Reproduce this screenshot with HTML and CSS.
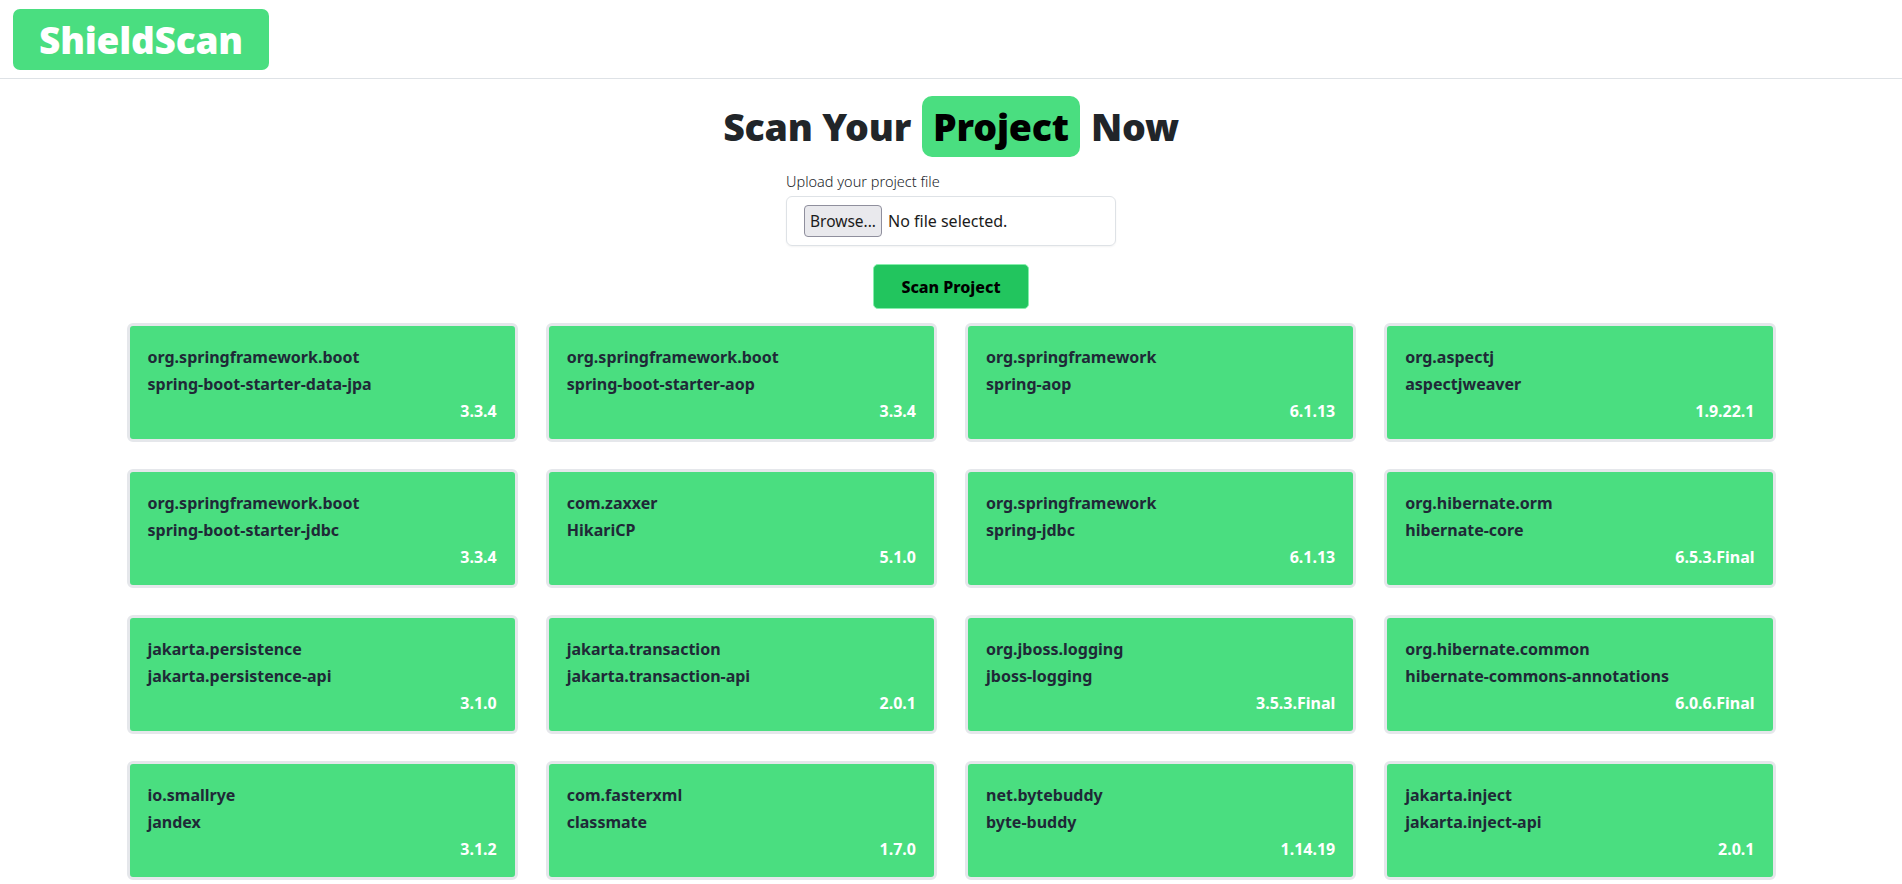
FILE: index.html
```html
<!DOCTYPE html>
<html lang="en">
<head>
<meta charset="utf-8">
<title>ShieldScan</title>
<link rel="stylesheet" href="styles.css">
</head>
<body>
<header class="site-header">
  <div class="logo">ShieldScan</div>
</header>
<main class="main">
  <h1 class="title"><span>Scan Your</span><span class="highlight">Project</span><span>Now</span></h1>
  <div class="upload">
    <label class="upload-label">Upload your project file</label>
    <div class="file-box">
      <button class="browse" type="button">Browse...</button>
      <span class="file-name">No file selected.</span>
    </div>
  </div>
  <div class="actions">
    <button class="scan-btn" type="button">Scan Project</button>
  </div>
  <section class="grid">
    <div class="card"><div class="group">org.springframework.boot</div><div class="artifact">spring-boot-starter-data-jpa</div><div class="version">3.3.4</div></div>
    <div class="card"><div class="group">org.springframework.boot</div><div class="artifact">spring-boot-starter-aop</div><div class="version">3.3.4</div></div>
    <div class="card"><div class="group">org.springframework</div><div class="artifact">spring-aop</div><div class="version">6.1.13</div></div>
    <div class="card"><div class="group">org.aspectj</div><div class="artifact">aspectjweaver</div><div class="version">1.9.22.1</div></div>
    <div class="card"><div class="group">org.springframework.boot</div><div class="artifact">spring-boot-starter-jdbc</div><div class="version">3.3.4</div></div>
    <div class="card"><div class="group">com.zaxxer</div><div class="artifact">HikariCP</div><div class="version">5.1.0</div></div>
    <div class="card"><div class="group">org.springframework</div><div class="artifact">spring-jdbc</div><div class="version">6.1.13</div></div>
    <div class="card"><div class="group">org.hibernate.orm</div><div class="artifact">hibernate-core</div><div class="version">6.5.3.Final</div></div>
    <div class="card"><div class="group">jakarta.persistence</div><div class="artifact">jakarta.persistence-api</div><div class="version">3.1.0</div></div>
    <div class="card"><div class="group">jakarta.transaction</div><div class="artifact">jakarta.transaction-api</div><div class="version">2.0.1</div></div>
    <div class="card"><div class="group">org.jboss.logging</div><div class="artifact">jboss-logging</div><div class="version">3.5.3.Final</div></div>
    <div class="card"><div class="group">org.hibernate.common</div><div class="artifact">hibernate-commons-annotations</div><div class="version">6.0.6.Final</div></div>
    <div class="card"><div class="group">io.smallrye</div><div class="artifact">jandex</div><div class="version">3.1.2</div></div>
    <div class="card"><div class="group">com.fasterxml</div><div class="artifact">classmate</div><div class="version">1.7.0</div></div>
    <div class="card"><div class="group">net.bytebuddy</div><div class="artifact">byte-buddy</div><div class="version">1.14.19</div></div>
    <div class="card"><div class="group">jakarta.inject</div><div class="artifact">jakarta.inject-api</div><div class="version">2.0.1</div></div>
  </section>
</main>
</body>
</html>
```
FILE: styles.css
```css
* { box-sizing: border-box; }
html, body { margin: 0; padding: 0; background: #fff; }
body {
  font-family: "Noto Sans", "Open Sans", sans-serif;
  color: #212529;
}
.site-header {
  height: 79px;
  padding: 9px 13px 0;
  border-bottom: 1px solid #dee2e6;
}
.logo {
  display: inline-flex;
  align-items: center;
  justify-content: center;
  width: 256px;
  height: 61px;
  background: #4ade80;
  border-radius: 7px;
  color: #fff;
  font-family: "Noto Sans", sans-serif;
  font-weight: 900;
  font-size: 37px;
  letter-spacing: -0.2px;
}
.main {
  display: flex;
  flex-direction: column;
  align-items: center;
}
.title {
  margin: 17px 0 0;
  display: flex;
  align-items: center;
  gap: 11px;
  font-family: "Noto Sans", sans-serif;
  font-weight: 900;
  font-size: 37.5px;
  color: #212529;
  height: 61px;
  letter-spacing: -0.2px;
}
.highlight {
  display: flex;
  align-items: center;
  height: 61px;
  padding: 0 11px;
  background: #4ade80;
  border-radius: 10px;
  color: #000;
}
.upload {
  width: 330px;
  margin-top: 14px;
}
.upload-label {
  display: block;
  font-size: 14.5px;
  line-height: 20px;
  font-weight: 300;
  color: #212529;
  margin-bottom: 5px;
}
.file-box {
  display: flex;
  align-items: center;
  gap: 6px;
  height: 50px;
  padding: 0 17px;
  border: 1px solid #dee2e6;
  border-radius: 6px;
  box-shadow: 0 1px 2px rgba(0,0,0,0.05);
}
.browse {
  height: 32px;
  width: 78px;
  padding: 0;
  font-family: "Noto Sans", sans-serif;
  font-size: 15.5px;
  color: #1b1b1b;
  background: #e9e9ed;
  border: 1px solid #8f8f9d;
  border-radius: 4px;
}
.file-name {
  font-size: 16px;
  color: #1b1b1b;
}
.actions {
  margin-top: 18px;
}
.scan-btn {
  width: 156px;
  height: 45px;
  background: #22c55e;
  border: 1px solid #86efac;
  border-radius: 5px;
  font-family: "Noto Sans", sans-serif;
  font-weight: 800;
  font-size: 16px;
  color: #000;
}
.grid {
  margin-top: 14px;
  width: 1649px;
  display: grid;
  grid-template-columns: repeat(4, 1fr);
  column-gap: 28px;
  row-gap: 27px;
  padding-bottom: 20px;
}
.card {
  height: 119px;
  background: #4ade80;
  border: 3px solid #e5e7eb;
  border-radius: 6px;
  padding: 22px 18px 0 18px;
  display: flex;
  flex-direction: column;
  font-weight: 700;
  font-size: 16px;
  letter-spacing: 0;
  color: #1f2937;
}
.group, .artifact {
  line-height: 27px;
  height: 27px;
  white-space: nowrap;
}
.group { margin-top: -4px; }
.version {
  text-align: right;
  color: #fff;
  line-height: 27px;
}
```
